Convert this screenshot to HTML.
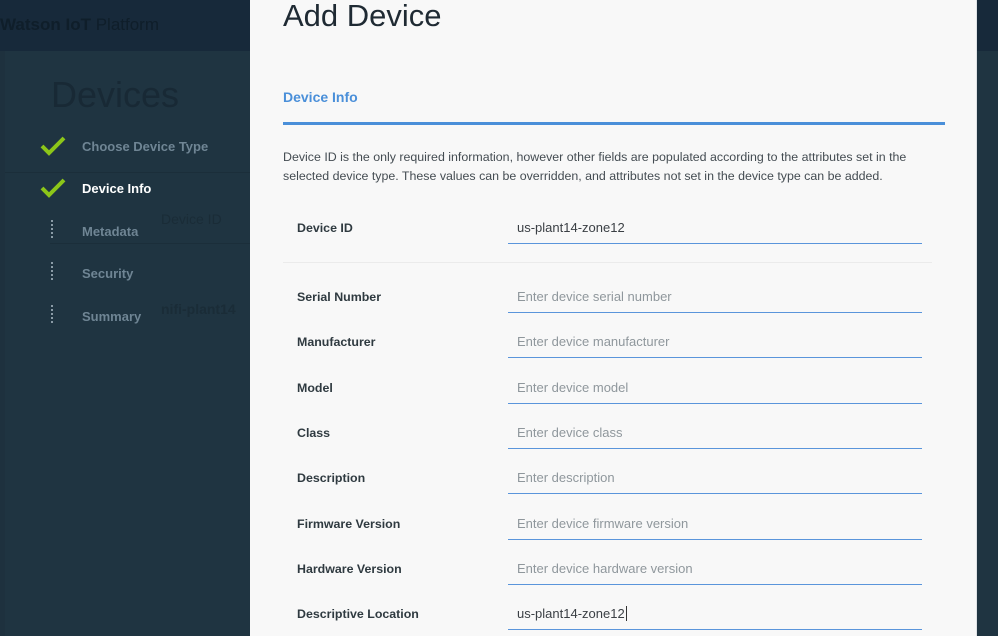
<!DOCTYPE html><html><head><style>
*{margin:0;padding:0;box-sizing:border-box}
body{width:998px;height:636px;overflow:hidden;position:relative;background:#1e313e;font-family:"Liberation Sans",sans-serif}
.a{position:absolute;white-space:nowrap}
.lbl{font-size:12.4px;font-weight:bold;color:#2f3a40}
.val{font-size:13px;color:#3a3f44}
.ph{font-size:13px;color:#8f979c}
.ul{position:absolute;left:508px;width:414px;height:1px;background:#5a95db}
.nav{font-size:13px;font-weight:bold;color:#6f8594}
.dots{position:absolute;left:51px;width:2px;height:20px;background:repeating-linear-gradient(#8a9ba6 0 2px,transparent 2px 4px)}
</style></head><body>
<div class="a" style="left:0;top:0;width:998px;height:51px;background:#17293a"></div>
<div class="a" style="left:0;top:15px;font-size:17px;color:#0f1e2a;font-weight:bold">Watson IoT <span style="font-weight:normal">Platform</span></div>
<div class="a" style="left:5px;top:51px;width:993px;height:585px;background:#1f3441"></div>
<div class="a" style="left:51px;top:74px;font-size:36px;color:#182935;font-weight:300">Devices</div>
<div class="a" style="left:5px;top:172px;width:245px;height:1px;background:#1b2e3a"></div>
<div class="a" style="left:50px;top:243px;width:200px;height:1px;background:#1b2e3a"></div>
<div class="a" style="left:161px;top:211px;font-size:14px;color:#1a2c37">Device ID</div>
<div class="a" style="left:161px;top:301px;font-size:14px;color:#1a2c37;font-weight:bold">nifi-plant14</div>
<svg class="a" style="left:40px;top:136px" width="26" height="20"><path d="M2 10 L9 17 L24 2" stroke="#8cc619" stroke-width="4" fill="none"/></svg>
<svg class="a" style="left:40px;top:178px" width="26" height="20"><path d="M2 10 L9 17 L24 2" stroke="#8cc619" stroke-width="4" fill="none"/></svg>
<div class="a nav" style="left:82px;top:139px">Choose Device Type</div>
<div class="a nav" style="left:82px;top:181px;color:#fff">Device Info</div>
<div class="dots" style="top:220px"></div>
<div class="dots" style="top:262px"></div>
<div class="dots" style="top:305px"></div>
<div class="a nav" style="left:82px;top:224px">Metadata</div>
<div class="a nav" style="left:82px;top:266px">Security</div>
<div class="a nav" style="left:82px;top:309px">Summary</div>
<div class="a" style="left:250px;top:0;width:727px;height:636px;background:#f8f8f8;border-right:1px solid #dfe3e6"></div>
<div class="a" style="left:283px;top:-2px;font-size:31px;color:#1f2a33;font-weight:300">Add Device</div>
<div class="a" style="left:283px;top:89px;font-size:14px;font-weight:bold;color:#4a8fd9">Device Info</div>
<div class="a" style="left:283px;top:122px;width:662px;height:3px;background:#4a8fd9"></div>
<div class="a" style="left:283px;top:148px;font-size:12.4px;line-height:19px;color:#444c52">Device ID is the only required information, however other fields are populated according to the attributes set in the<br>selected device type. These values can be overridden, and attributes not set in the device type can be added.</div>
<div class="a" style="left:283px;top:262px;width:649px;height:1px;background:#ebebeb"></div>
<div class="a lbl" style="left:297px;top:221px">Device ID</div><div class="a val" style="left:517px;top:220px">us-plant14-zone12</div><div class="ul" style="top:243px"></div>
<div class="a lbl" style="left:297px;top:290px">Serial Number</div><div class="a ph" style="left:517px;top:289px">Enter device serial number</div><div class="ul" style="top:312px"></div>
<div class="a lbl" style="left:297px;top:335px">Manufacturer</div><div class="a ph" style="left:517px;top:334px">Enter device manufacturer</div><div class="ul" style="top:357px"></div>
<div class="a lbl" style="left:297px;top:381px">Model</div><div class="a ph" style="left:517px;top:380px">Enter device model</div><div class="ul" style="top:403px"></div>
<div class="a lbl" style="left:297px;top:426px">Class</div><div class="a ph" style="left:517px;top:425px">Enter device class</div><div class="ul" style="top:448px"></div>
<div class="a lbl" style="left:297px;top:471px">Description</div><div class="a ph" style="left:517px;top:470px">Enter description</div><div class="ul" style="top:493px"></div>
<div class="a lbl" style="left:297px;top:517px">Firmware Version</div><div class="a ph" style="left:517px;top:516px">Enter device firmware version</div><div class="ul" style="top:539px"></div>
<div class="a lbl" style="left:297px;top:562px">Hardware Version</div><div class="a ph" style="left:517px;top:561px">Enter device hardware version</div><div class="ul" style="top:584px"></div>
<div class="a lbl" style="left:297px;top:607px">Descriptive Location</div><div class="a val" style="left:517px;top:606px">us-plant14-zone12<span style="border-left:1px solid #333;margin-left:1px"></span></div><div class="ul" style="top:629px"></div>
</body></html>
